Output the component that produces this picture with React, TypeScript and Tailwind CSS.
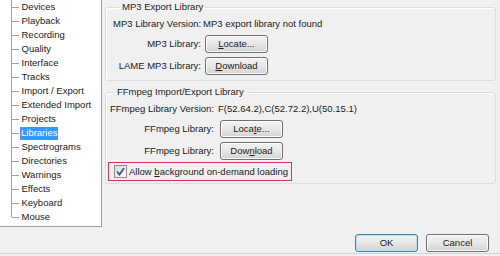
import React from "react";

const items = [
  "Devices",
  "Playback",
  "Recording",
  "Quality",
  "Interface",
  "Tracks",
  "Import / Export",
  "Extended Import",
  "Projects",
  "Libraries",
  "Spectrograms",
  "Directories",
  "Warnings",
  "Effects",
  "Keyboard",
  "Mouse",
];

function Btn({ children, w = "w-[63px]", def = false }: { children: React.ReactNode; w?: string; def?: boolean }) {
  return (
    <div
      className={`${w} h-[18px] rounded-[3px] border ${
        def ? "border-[#3c7fb1] shadow-[inset_0_0_0_1px_#b6e3f7]" : "border-[#707070] shadow-[inset_0_0_0_1px_#fcfcfc]"
      } bg-linear-to-b from-[#f2f2f2] via-[#e8e8e8] to-[#d2d2d2] flex items-center justify-center text-[#1a1a1a] whitespace-nowrap`}
    >
      {children}
    </div>
  );
}

function TreeRow({ label, last, selected }: { label: string; last: boolean; selected: boolean }) {
  return (
    <div className="flex h-[14px] items-center whitespace-nowrap">
      <div className="relative w-[20px] h-full shrink-0">
        <div className={`absolute left-[11px] top-0 w-px bg-[#a0a0a0] ${last ? "h-[7px]" : "h-full"}`} />
        <div className="absolute left-[12px] top-[7px] h-px w-[7px] bg-[#a0a0a0]" />
      </div>
      {selected ? (
        <div className="h-[13px] flex items-center px-px bg-[#3399ff] text-white outline outline-dotted outline-1 -outline-offset-1 outline-[#c07a3a]">
          {label}
        </div>
      ) : (
        <div className="px-[1.5px] text-[#1a1a1a]">{label}</div>
      )}
    </div>
  );
}

export default function App() {
  return (
    <div
      className="w-[500px] h-[256px] bg-[#f0f0f0] flex flex-col overflow-hidden text-[9.5px] leading-[12px] text-[#1a1a1a]"
      style={{ fontFamily: '"Liberation Sans", Arial, sans-serif' }}
    >
      <div className="flex h-[228px]">
        <div className="w-[102px] h-[227px] bg-white border-r border-b border-[#9a9ea6] flex flex-col">
          {items.map((it, i) => (
            <TreeRow key={it} label={it} last={i === items.length - 1} selected={it === "Libraries"} />
          ))}
        </div>
        <div className="flex-1 pl-[3px] pr-[4px] pt-px flex flex-col">
          <fieldset className="border border-[#d5dfe5] rounded-[3px] shadow-[inset_1px_1px_0_#ffffff] h-[80px] px-[7px] pt-[4px]">
            <legend className="px-[2px] leading-[12px] ml-[7px]">MP3 Export Library</legend>
            <div className="grid grid-cols-[88px_1fr] gap-x-[2px] gap-y-[4px] items-center whitespace-nowrap">
              <div className="text-right h-[14px] leading-[14px]">MP3 Library Version:</div>
              <div className="h-[14px] leading-[14px]">MP3 export library not found</div>
              <div className="text-right">MP3 Library:</div>
              <div className="pl-[2px]">
                <Btn>
                  <span>
                    <span className="underline">L</span>ocate...
                  </span>
                </Btn>
              </div>
              <div className="text-right">LAME MP3 Library:</div>
              <div className="pl-[2px]">
                <Btn>
                  <span>
                    <span className="underline">D</span>ownload
                  </span>
                </Btn>
              </div>
            </div>
          </fieldset>
          <fieldset className="mt-[5px] border border-[#d5dfe5] rounded-[3px] shadow-[inset_1px_1px_0_#ffffff] h-[98px] px-[2px] pt-[4px]">
            <legend className="px-[2px] leading-[12px] ml-[7px]">FFmpeg Import/Export Library</legend>
            <div className="grid grid-cols-[106px_1fr] gap-x-[4px] gap-y-[4px] items-center whitespace-nowrap">
              <div className="text-right h-[14px] leading-[14px]">FFmpeg Library Version:</div>
              <div className="h-[14px] leading-[14px]">F(52.64.2),C(52.72.2),U(50.15.1)</div>
              <div className="text-right">FFmpeg Library:</div>
              <div className="pl-[2px]">
                <Btn>
                  <span>
                    Loca<span className="underline">t</span>e...
                  </span>
                </Btn>
              </div>
              <div className="text-right">FFmpeg Library:</div>
              <div className="pl-[2px]">
                <Btn>
                  <span>
                    Dow<span className="underline">n</span>load
                  </span>
                </Btn>
              </div>
            </div>
            <div className="mt-[2px] w-[184px] h-[19px] border border-[#e0305a] flex items-center pl-[5px] gap-[2px] whitespace-nowrap">
              <div className="w-[13px] h-[13px] border border-[#8f8f8f] bg-linear-to-br from-[#dcdcdc] to-[#fafafa] flex items-center justify-center">
                <svg width="9" height="9" viewBox="0 0 9 9">
                  <path d="M1 4.5 L3.5 7.5 L8 1" stroke="#3d4f8c" strokeWidth="1.7" fill="none" />
                </svg>
              </div>
              <span>
                Allow <span className="underline">b</span>ackground on-demand loading
              </span>
            </div>
          </fieldset>
        </div>
      </div>
      <div className="flex justify-end gap-[8px] pr-[11px] pt-[6px] h-[26px] border-b border-[#d6d6d6]">
        <Btn def>OK</Btn>
        <Btn>Cancel</Btn>
      </div>
    </div>
  );
}
